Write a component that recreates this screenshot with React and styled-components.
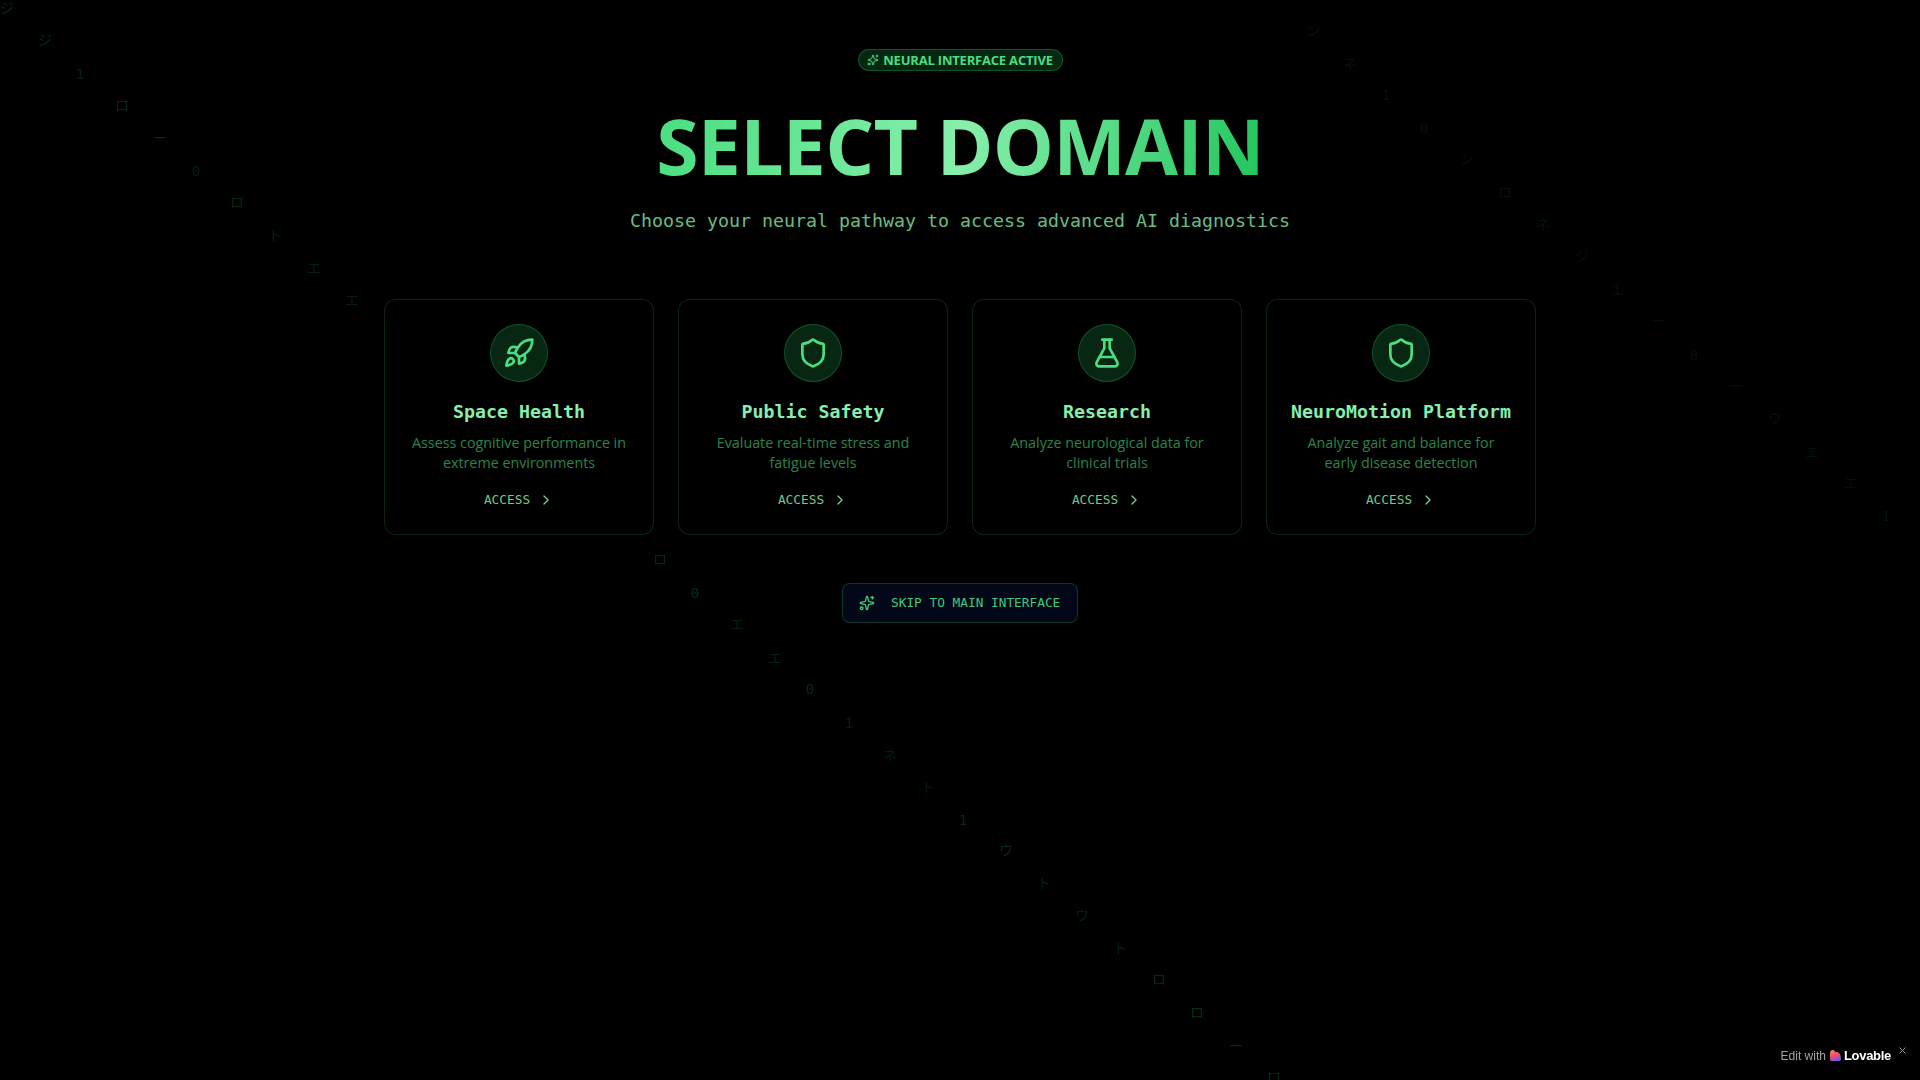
import React from 'react';
import styled, { createGlobalStyle } from 'styled-components';
import { Rocket, Shield, FlaskConical, ChevronRight, Sparkles, X } from 'lucide-react';

const mono = '"DejaVu Sans Mono", "Liberation Mono", monospace';
const sans = '"Open Sans", "Noto Sans", sans-serif';

const GlobalStyle = createGlobalStyle`
  html, body {
    margin: 0;
    padding: 0;
    background: #000;
  }
  * {
    box-sizing: border-box;
  }
`;

// what is left of the falling characters on the background canvas: [char, x, y, alpha]
const rain = [
  ['ジ', 7, 8, 0.2], ['ジ', 45, 40, 0.2], ['1', 80, 74, 0.16], ['ロ', 122, 105, 0.2], ['ー', 160, 138, 0.2],
  ['0', 196, 171, 0.16], ['ロ', 237, 202, 0.2], ['ト', 275, 235, 0.16], ['エ', 314, 268, 0.16], ['エ', 352, 300, 0.16],
  ['ン', 1313, 31, 0.09], ['ネ', 1350, 63, 0.09], ['1', 1386, 95, 0.09], ['0', 1424, 128, 0.1], ['ン', 1467, 159, 0.09],
  ['ロ', 1505, 192, 0.1], ['ネ', 1543, 224, 0.09], ['ジ', 1582, 256, 0.08], ['1', 1617, 290, 0.1], ['ー', 1659, 321, 0.09],
  ['0', 1694, 355, 0.09], ['ー', 1736, 386, 0.09], ['ウ', 1775, 418, 0.08], ['エ', 1812, 452, 0.09], ['エ', 1851, 483, 0.08], ['1', 1886, 516, 0.09],
  ['ロ', 660, 559, 0.2], ['0', 695, 593, 0.22], ['エ', 737, 624, 0.16], ['エ', 775, 658, 0.16], ['0', 810, 689, 0.2],
  ['1', 849, 723, 0.16], ['ネ', 890, 755, 0.14], ['ト', 928, 787, 0.14], ['1', 963, 820, 0.2], ['ウ', 1006, 850, 0.2],
  ['ト', 1044, 883, 0.16], ['ウ', 1082, 915, 0.16], ['ト', 1120, 948, 0.16], ['ロ', 1159, 979, 0.2], ['ロ', 1197, 1012, 0.24],
  ['ー', 1236, 1046, 0.2], ['ロ', 1274, 1077, 0.2],
];

const domains = [
  { title: 'Space Health', text: 'Assess cognitive performance in extreme environments', icon: Rocket },
  { title: 'Public Safety', text: 'Evaluate real-time stress and fatigue levels', icon: Shield },
  { title: 'Research', text: 'Analyze neurological data for clinical trials', icon: FlaskConical },
  { title: 'NeuroMotion Platform', text: 'Analyze gait and balance for early disease detection', icon: Shield },
];

const Page = styled.div`
  position: relative;
  height: 1080px;
  overflow: hidden;
  background: #000;
  display: flex;
  flex-direction: column;
  align-items: center;
  padding-top: 49px;
`;

const Rain = styled.div`
  position: absolute;
  inset: 0;
  pointer-events: none;
`;

const Glyph = styled.span`
  position: absolute;
  transform: translate(-50%, -50%);
  font-family: ${mono}, "Noto Sans CJK JP";
  font-size: 14px;
  line-height: 1;
  color: #22c55e;
`;

const Content = styled.main`
  position: relative;
  width: 1152px;
  display: flex;
  flex-direction: column;
  align-items: center;
`;

const Badge = styled.div`
  display: flex;
  align-items: center;
  justify-content: center;
  gap: 4px;
  width: 205px;
  height: 22px;
  border: 1px solid rgba(34, 197, 94, 0.3);
  border-radius: 999px;
  background: rgba(34, 197, 94, 0.2);
  color: #4ade80;
  font-family: ${sans};
  font-size: 13px;
  font-weight: 700;
  letter-spacing: -0.2px;
`;

const Title = styled.h1`
  margin: 39px 0 25px;
  font-family: ${sans};
  font-size: 77px;
  font-weight: 700;
  line-height: 72px;
  letter-spacing: -0.8px;
  background: linear-gradient(100deg, #4ade80 0%, #86efac 50%, #22c55e 100%);
  -webkit-background-clip: text;
  background-clip: text;
  color: transparent;
`;

const Subtitle = styled.p`
  margin: 0 0 64px;
  font-family: ${mono};
  font-size: 18.27px;
  line-height: 28px;
  color: rgba(134, 239, 172, 0.8);
`;

const Grid = styled.div`
  width: 100%;
  display: grid;
  grid-template-columns: repeat(4, 1fr);
  gap: 24px;
`;

const Card = styled.article`
  display: flex;
  flex-direction: column;
  align-items: center;
  padding: 24px;
  height: 236px;
  border: 1px solid rgba(34, 197, 94, 0.2);
  border-radius: 12px;
  background: #000;
  text-align: center;
`;

const IconCircle = styled.div`
  width: 58px;
  height: 58px;
  margin-bottom: 16px;
  display: flex;
  align-items: center;
  justify-content: center;
  border: 1px solid rgba(34, 197, 94, 0.3);
  border-radius: 50%;
  background: rgba(34, 197, 94, 0.2);
  color: #4ade80;
`;

const CardTitle = styled.h3`
  margin: 0 0 7px;
  font-family: ${mono};
  font-size: 18.27px;
  font-weight: 700;
  line-height: 28px;
  color: #86efac;
`;

const CardText = styled.p`
  margin: 0 0 17px;
  font-family: ${sans};
  font-size: 14.3px;
  line-height: 20px;
  color: rgba(74, 222, 128, 0.6);
`;

const Access = styled.div`
  display: flex;
  align-items: center;
  gap: 8px;
  font-family: ${mono};
  font-size: 12.79px;
  line-height: 20px;
  color: rgba(134, 239, 172, 0.85);
`;

const SkipButton = styled.button`
  margin-top: 48px;
  width: 236px;
  height: 40px;
  display: flex;
  align-items: center;
  gap: 16px;
  padding: 0 16px 1px;
  border: 1px solid rgba(34, 197, 94, 0.25);
  border-radius: 8px;
  background: #020817;
  color: #3fc880;
  font-family: ${mono};
  font-size: 12.79px;
`;

const Lovable = styled.div`
  position: fixed;
  right: 12px;
  bottom: 17px;
  display: flex;
  align-items: center;
  font-family: "Liberation Sans", Arial, sans-serif;
  font-size: 12px;
  color: #a3a3a3;
`;

const LovableName = styled.span`
  margin-left: 2px;
  font-size: 13px;
  font-weight: 700;
  letter-spacing: -0.3px;
  color: #fff;
`;

const Close = styled(X)`
  margin: -10px 0 0 6px;
  color: #a3a3a3;
`;

const Heart = styled.svg`
  margin-left: 3px;
`;

function DomainCard({ title, text, icon: Icon }) {
  return (
    <Card>
      <IconCircle>
        <Icon size={32} strokeWidth={2} />
      </IconCircle>
      <CardTitle>{title}</CardTitle>
      <CardText>{text}</CardText>
      <Access>
        ACCESS
        <ChevronRight size={16} />
      </Access>
    </Card>
  );
}

export default function App() {
  return (
    <Page>
      <GlobalStyle />
      <Rain>
        {rain.map(([char, x, y, alpha], i) => (
          <Glyph key={i} style={{ left: x, top: y, opacity: alpha }}>{char}</Glyph>
        ))}
      </Rain>

      <Content>
        <Badge>
          <Sparkles size={12} />
          NEURAL INTERFACE ACTIVE
        </Badge>
        <Title>SELECT DOMAIN</Title>
        <Subtitle>Choose your neural pathway to access advanced AI diagnostics</Subtitle>

        <Grid>
          {domains.map((d) => (
            <DomainCard key={d.title} {...d} />
          ))}
        </Grid>

        <SkipButton>
          <Sparkles size={16} />
          SKIP TO MAIN INTERFACE
        </SkipButton>
      </Content>

      <Lovable>
        Edit with
        <Heart width="13" height="13" viewBox="0 0 12 12">
          <defs>
            <linearGradient id="lovableHeart" x1="0.2" y1="0" x2="0.6" y2="1">
              <stop offset="0" stopColor="#ff8a3c" />
              <stop offset="0.55" stopColor="#f0467c" />
              <stop offset="1" stopColor="#6a5cf0" />
            </linearGradient>
          </defs>
          <path d="M1 3.500C1 1.800 2.300 1 3.400 1 4.800 1 5.600 2 6 3.200 7 2.600 8 2.800 9.400 4c1.300 1.200 1.600 3 1.600 5.500 0 .9-.6 1.500-1.500 1.500H2.500C1.600 11 1 10.400 1 9.500z" fill="url(#lovableHeart)" />
        </Heart>
        <LovableName>Lovable</LovableName>
        <Close size={11} />
      </Lovable>
    </Page>
  );
}
